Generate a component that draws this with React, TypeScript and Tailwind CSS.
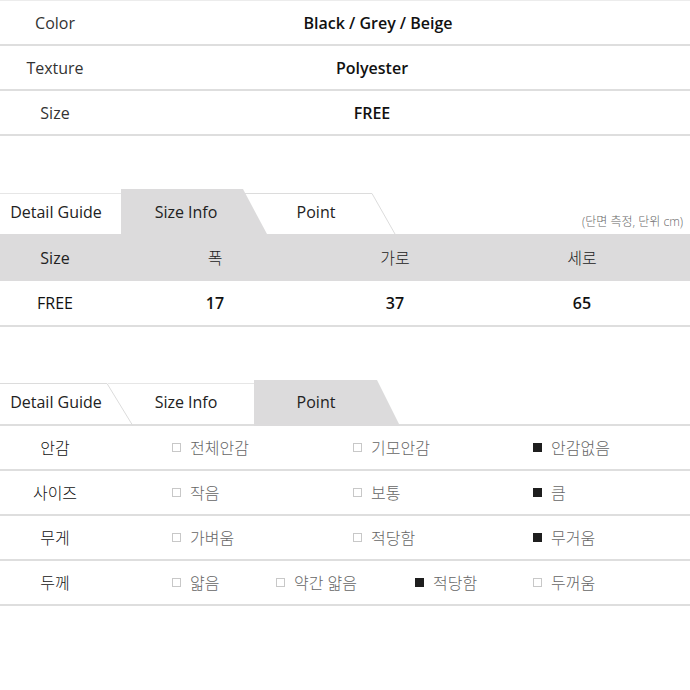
import React from 'react';

const font = "font-['Open_Sans','Noto_Sans_CJK_KR',sans-serif]";

const basicInfo = [
  { label: 'Color', value: 'Black / Grey / Beige', shift: 'pl-[12px]' },
  { label: 'Texture', value: 'Polyester', shift: '' },
  { label: 'Size', value: 'FREE', shift: '' },
];

type Option = { text: string; checked: boolean };
type PointRow = { label: string; cols: string; options: Option[] };

const pointRows: PointRow[] = [
  {
    label: '안감',
    cols: 'grid-cols-[181px_180px_1fr]',
    options: [
      { text: '전체안감', checked: false },
      { text: '기모안감', checked: false },
      { text: '안감없음', checked: true },
    ],
  },
  {
    label: '사이즈',
    cols: 'grid-cols-[181px_180px_1fr]',
    options: [
      { text: '작음', checked: false },
      { text: '보통', checked: false },
      { text: '큼', checked: true },
    ],
  },
  {
    label: '무게',
    cols: 'grid-cols-[181px_180px_1fr]',
    options: [
      { text: '가벼움', checked: false },
      { text: '적당함', checked: false },
      { text: '무거움', checked: true },
    ],
  },
  {
    label: '두께',
    cols: 'grid-cols-[104px_139px_118px_1fr]',
    options: [
      { text: '얇음', checked: false },
      { text: '약간 얇음', checked: false },
      { text: '적당함', checked: true },
      { text: '두꺼움', checked: false },
    ],
  },
];

const TabLabels = () => (
  <div className="relative grid h-full grid-cols-[112px_148px_112px] items-center text-[16px] text-[#222]">
    <span className="text-center">Detail Guide</span>
    <span className="text-center">Size Info</span>
    <span className="text-center">Point</span>
  </div>
);

const Box = ({ checked }: { checked: boolean }) =>
  checked ? (
    <span className="inline-block h-[9px] w-[9px] bg-[#1e1e1e]" />
  ) : (
    <span className="inline-block h-[9px] w-[9px] border border-[#c8c8c8] bg-white" />
  );

export default function App() {
  return (
    <div className={`w-[690px] h-[690px] bg-white ${font}`}>
      {/* basic info */}
      <div className="border-t border-[#ececec]">
        {basicInfo.map(row => (
          <div key={row.label} className="grid h-[45px] grid-cols-[110px_1fr] items-center border-b-2 border-[#dedede]">
            <span className="text-center text-[16px] text-[#333]">{row.label}</span>
            <span className={`pr-[56px] text-center text-[16px] font-semibold text-[#111] ${row.shift}`}>{row.value}</span>
          </div>
        ))}
      </div>

      {/* size info */}
      <div className="mt-[53px]">
        <div className="relative h-[45px]">
          <svg className="absolute inset-0" width="690" height="45" viewBox="0 0 690 45">
            <path d="M0 4.5 H121" stroke="#e6e6e6" strokeWidth="1" fill="none" />
            <path d="M243 4.5 H372 L395 45" stroke="#dcdcdc" strokeWidth="1" fill="#fff" />
            <polygon points="121,0 243,0 267,45 121,45" fill="#dcdbdc" />
          </svg>
          <TabLabels />
          <span className="absolute right-[7px] bottom-[3px] text-[12px] font-light text-[#666]">(단면 측정, 단위 cm)</span>
        </div>
        <div className="grid h-[47px] grid-cols-[110px_210px_150px_1fr] items-center bg-[#dcdbdc] text-[16px] text-[#222]">
          <span className="text-center">Size</span>
          <span className="text-center font-light">폭</span>
          <span className="text-center font-light">가로</span>
          <span className="pl-[4px] text-center font-light">세로</span>
        </div>
        <div className="grid h-[46px] grid-cols-[110px_210px_150px_1fr] items-center border-b-2 border-[#dedede] text-[16px] text-[#111]">
          <span className="text-center">FREE</span>
          <span className="text-center font-semibold">17</span>
          <span className="text-center font-semibold">37</span>
          <span className="pl-[4px] text-center font-semibold">65</span>
        </div>
      </div>

      {/* point */}
      <div className="mt-[53px]">
        <div className="relative h-[46px] border-b-2 border-[#dedede]">
          <svg className="absolute inset-0" width="690" height="46" viewBox="0 0 690 46">
            <path d="M0 3.5 H107 L133 46" stroke="#dcdcdc" strokeWidth="1" fill="none" />
            <path d="M108 3.5 H254" stroke="#e6e6e6" strokeWidth="1" fill="none" />
            <polygon points="254,0 377,0 400,46 254,46" fill="#dcdbdc" />
          </svg>
          <TabLabels />
        </div>
        {pointRows.map(row => (
          <div key={row.label} className="flex h-[45px] items-center border-b-2 border-[#dedede]">
            <span className="w-[110px] text-center text-[16px] font-light text-[#111]">{row.label}</span>
            <div className={`ml-[62px] grid flex-1 ${row.cols}`}>
              {row.options.map((opt, i) => (
                <div key={i} className="flex items-center gap-[9px]">
                  <Box checked={opt.checked} />
                  <span className="text-[16px] font-light text-[#666]">{opt.text}</span>
                </div>
              ))}
            </div>
          </div>
        ))}
      </div>
    </div>
  );
}
